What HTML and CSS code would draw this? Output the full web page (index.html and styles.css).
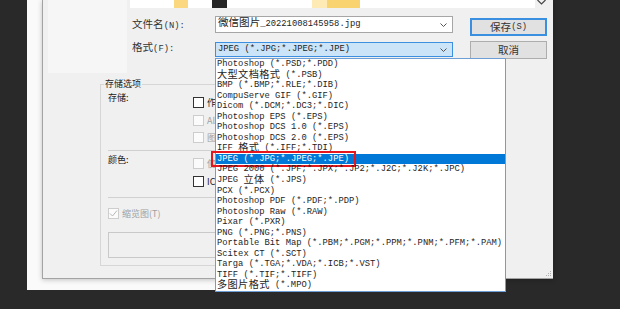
FILE: index.html
```html
<!DOCTYPE html>
<html lang="zh-CN">
<head>
<meta charset="utf-8">
<title>另存为</title>
<link rel="stylesheet" href="styles.css">
</head>
<body>
<div class="desk">
  <div class="frame">
    <div class="dialog">
      <div class="top">
        <div class="nav"></div>
        <div class="main">
          <div class="browse">
            <div class="files">
              <span class="thumb t1"></span>
              <span class="thumb t2"></span>
              <span class="thumb t3"></span>
            </div>
            <svg class="collapse" width="9" height="5" viewBox="0 0 9 5"><polyline points="0.5,0 4.5,4 8.5,0" fill="none" stroke="#444" stroke-width="1.2"/></svg>
          </div>
          <div class="fields">
            <div class="lbl l1"><span class="c">文件名</span>(N):</div>
            <div class="input">
              <span class="val"><span class="c">微信图片</span>_20221008145958.jpg</span>
              <svg class="chev" width="7" height="4" viewBox="0 0 7 4"><polyline points="0.5,0.5 3.5,3.5 6.5,0.5" fill="none" stroke="#555" stroke-width="1"/></svg>
            </div>
            <button class="btn save"><span class="c">保存</span>(S)</button>
            <div class="lbl l2"><span class="c">格式</span>(F):</div>
            <div class="combo">
              <span class="val">JPEG (*.JPG;*.JPEG;*.JPE)</span>
              <svg class="chev" width="7" height="4" viewBox="0 0 7 4"><polyline points="0.5,0.5 3.5,3.5 6.5,0.5" fill="none" stroke="#555" stroke-width="1"/></svg>
              <div class="list">
                <div class="opt">Photoshop (*.PSD;*.PDD)</div>
                <div class="opt"><span class="c">大型文档格式</span> (*.PSB)</div>
                <div class="opt">BMP (*.BMP;*.RLE;*.DIB)</div>
                <div class="opt">CompuServe GIF (*.GIF)</div>
                <div class="opt">Dicom (*.DCM;*.DC3;*.DIC)</div>
                <div class="opt">Photoshop EPS (*.EPS)</div>
                <div class="opt">Photoshop DCS 1.0 (*.EPS)</div>
                <div class="opt">Photoshop DCS 2.0 (*.EPS)</div>
                <div class="opt">IFF <span class="c">格式</span> (*.IFF;*.TDI)</div>
                <div class="opt sel">JPEG (*.JPG;*.JPEG;*.JPE)<span class="mark"></span></div>
                <div class="opt">JPEG 2000 (*.JPF;*.JPX;*.JP2;*.J2C;*.J2K;*.JPC)</div>
                <div class="opt">JPEG <span class="c">立体</span> (*.JPS)</div>
                <div class="opt">PCX (*.PCX)</div>
                <div class="opt">Photoshop PDF (*.PDF;*.PDP)</div>
                <div class="opt">Photoshop Raw (*.RAW)</div>
                <div class="opt">Pixar (*.PXR)</div>
                <div class="opt">PNG (*.PNG;*.PNS)</div>
                <div class="opt">Portable Bit Map (*.PBM;*.PGM;*.PPM;*.PNM;*.PFM;*.PAM)</div>
                <div class="opt">Scitex CT (*.SCT)</div>
                <div class="opt">Targa (*.TGA;*.VDA;*.ICB;*.VST)</div>
                <div class="opt">TIFF (*.TIF;*.TIFF)</div>
                <div class="opt"><span class="c">多图片格式</span> (*.MPO)</div>
              </div>
            </div>
            <button class="btn cancel"><span class="c">取消</span></button>
          </div>
        </div>
      </div>
      <fieldset class="group">
        <legend>存储选项</legend>
        <div class="sec s1">
          <div class="sec-label">存储:</div>
          <div class="checks">
            <div class="chk"><span class="box"></span>作为副本(Y)</div>
            <div class="chk off"><span class="box"></span>Alpha 通道(A)</div>
            <div class="chk off"><span class="box"></span>图层(L)</div>
          </div>
        </div>
        <div class="sep"></div>
        <div class="sec s2">
          <div class="sec-label">颜色:</div>
          <div class="checks">
            <div class="chk off"><span class="box"></span>使用校样设置(O)</div>
            <div class="chk"><span class="box"></span>ICC 配置文件(C)</div>
          </div>
        </div>
        <div class="sep sep2"></div>
        <div class="chk off thumbrow"><span class="box"><svg width="9" height="9" viewBox="0 0 9 9"><polyline points="1,4.5 3.5,7 8,1.5" fill="none" stroke="#b8b8b8" stroke-width="1"/></svg></span>缩览图(T)</div>
        <div class="preview"></div>
      </fieldset>
      <svg class="grip" width="6" height="6" viewBox="0 0 6 6"><g fill="#b0b0b0"><rect x="4" y="0" width="1" height="1"/><rect x="2" y="2" width="1" height="1"/><rect x="4" y="2" width="1" height="1"/><rect x="0" y="4" width="1" height="1"/><rect x="2" y="4" width="1" height="1"/><rect x="4" y="4" width="1" height="1"/></g></svg>
    </div>
  </div>
</div>
</body>
</html>
```

FILE: styles.css
```css
* { box-sizing: border-box; }
html, body { margin: 0; background: #292929; }
body {
  width: 620px;
  height: 309px;
  overflow: hidden;
  font-family: "Liberation Mono", monospace;
  font-size: 8.8px;
  color: #222;
}
.c {
  font-family: "Noto Sans CJK SC", sans-serif;
  font-size: 10.56px;
}
.opt .c, .val .c, .lbl .c { line-height: 0; }
.opt .c { vertical-align: -1px; font-size: 10.2px; letter-spacing: 0.36px; }
.desk { display: flex; padding-left: 27px; }
.frame {
  width: 473px;
  height: 290px;
  background: #fafafa;
  padding-left: 15px;
}
.dialog {
  flex: none;
  width: 511px;
  height: 279px;
  background: #f0f0f0;
  border-left: 1px solid #a3a3a3;
  border-bottom: 1px solid #a3a3a3;
  box-shadow: 0 1px 5px rgba(0, 0, 0, 0.22);
  padding-left: 5px;
  display: flex;
  flex-direction: column;
}
.top { display: flex; }
.nav { flex: none; width: 79px; height: 73px; background: #f6f6f6; }
.main { margin-left: 3px; }
.browse { display: flex; align-items: flex-start; }
.files { width: 405px; height: 8px; background: #fff; display: flex; }
.thumb { height: 8px; flex: none; }
.t1 { margin-left: 44px; width: 14px; background: #fbd87f; }
.t2 { margin-left: 24px; width: 15px; background: #262626; }
.t3 { margin-left: 85px; width: 48px; background: linear-gradient(90deg, #fdeab4 0 15px, #f8d36f 15px); }
.collapse { margin-left: 2px; }

.fields {
  display: grid;
  grid-template-columns: 68px 238px 77px;
  grid-template-rows: 20px 18px;
  column-gap: 17px;
  row-gap: 5px;
  margin-top: 8px;
}
.lbl { line-height: 13px; color: #333; white-space: nowrap; align-self: start; margin-left: 2px; }
.l1 { margin-top: 4px; }
.l2 { margin-top: 2px; }
.input, .combo {
  align-self: start;
  display: flex;
  align-items: center;
  justify-content: space-between;
  padding: 0 5px 0 2px;
  white-space: nowrap;
  color: #222;
}
.input { height: 17px; border: 1px solid #a6a6a6; background: #fff; }
.combo {
  position: relative;
  margin-top: 1px;
  height: 15px;
  border: 1px solid #3d8fe0;
  background: #cce4f7;
}
.val { line-height: 13px; }
.btn {
  font: inherit;
  color: #333;
  background: #e1e1e1;
  border: 1px solid #adadad;
  padding: 0;
  line-height: 14px;
  display: flex;
  align-items: center;
  justify-content: center;
  white-space: nowrap;
}
.save { margin-top: 2px; height: 18px; border: 2px solid #3b8fe0; }
.cancel { height: 18px; }

.list {
  position: absolute;
  top: 15px;
  left: -1px;
  width: 291px;
  height: 234px;
  background: #fff;
  border: 1px solid #6d9ed6;
  z-index: 5;
  color: #1e1e1e;
}
.opt {
  position: relative;
  height: 10.55px;
  line-height: 10.55px;
  padding-left: 1px;
  white-space: nowrap;
}
.opt.sel { background: #0078d7; color: #fff; }
.mark {
  position: absolute;
  left: -5px;
  top: -3px;
  width: 145px;
  height: 16px;
  border: 2px solid #e5161c;
}

.group {
  align-self: flex-start;
  margin: 5px 0 0 52px;
  width: 380px;
  min-width: 0;
  border: 1px solid #d6d6d6;
  padding: 2px 0 7px 7px;
  font-family: "Noto Sans CJK SC", sans-serif;
  font-size: 9px;
}
.group legend {
  font-size: 9px;
  line-height: 12px;
  padding: 0 1px;
  margin-left: -4px;
  color: #222;
}
.sec { display: grid; grid-template-columns: 85px 1fr; }
.sec-label { line-height: 12px; color: #1a1a1a; }
.checks { display: flex; flex-direction: column; }
.s1 .checks { padding-top: 5px; gap: 6.5px; }
.s2 { padding-top: 3px; }
.s2 .checks { padding-top: 4px; gap: 7px; }
.chk {
  display: flex;
  align-items: center;
  gap: 3px;
  height: 11px;
  line-height: 11px;
  white-space: nowrap;
  color: #222;
}
.box {
  flex: none;
  width: 11px;
  height: 11px;
  border: 1px solid #333;
  background: #fff;
  display: flex;
}
.off { color: #a0a0a0; }
.off .box { border-color: #cdcdcd; background: #fbfbfb; }
.sep { margin-top: 7px; border-top: 1px solid #d0d0d0; }
.sep2 { margin-top: 10px; }
.thumbrow { margin-top: 10px; }
.preview {
  margin-top: 13px;
  width: 360px;
  height: 26px;
  border: 1px solid #c9c9c9;
  background: #f0f0f0;
}
.grip { margin-top: auto; align-self: flex-end; margin-right: 1px; margin-bottom: 1px; }
```
